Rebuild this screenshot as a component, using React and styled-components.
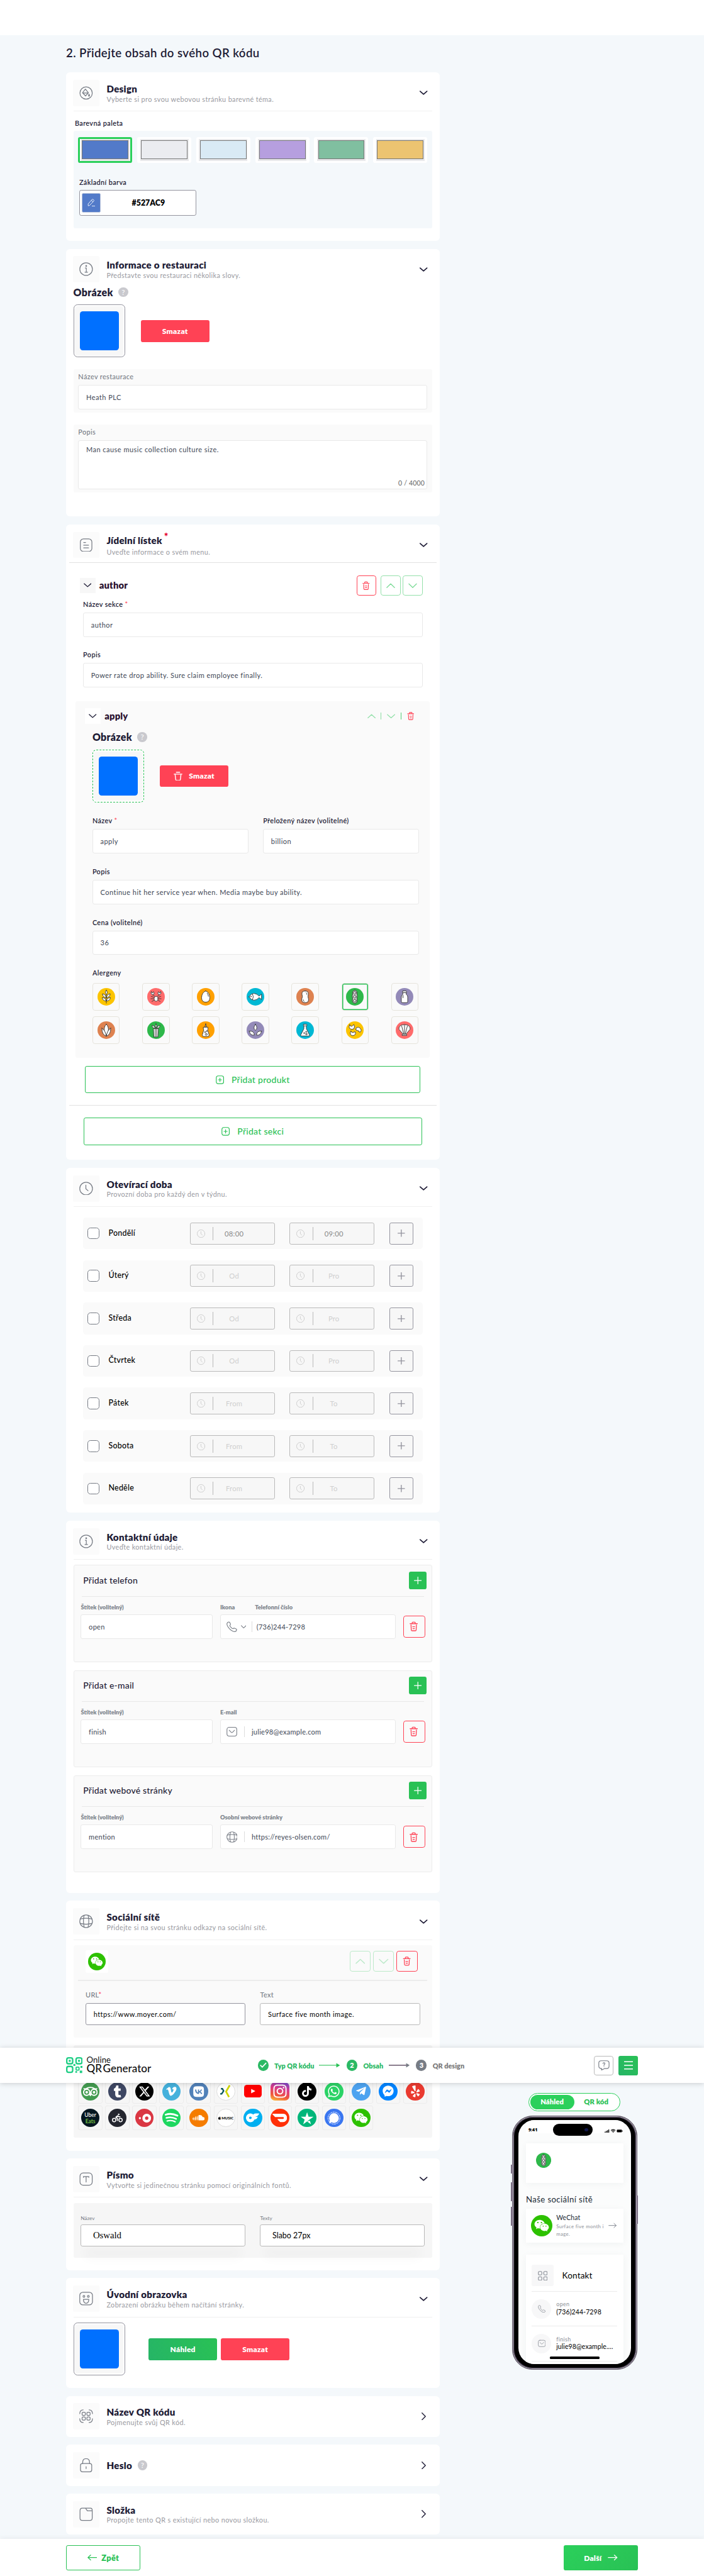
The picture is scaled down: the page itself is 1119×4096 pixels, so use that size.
import React from "react";
import styled, { createGlobalStyle, css } from "styled-components";
import {
  FaTumblr, FaXTwitter, FaVimeoV, FaVk, FaInstagram, FaTiktok, FaWhatsapp,
  FaFacebookMessenger, FaYelp, FaSoundcloud, FaWeixin, FaApple, FaPersonBiking,
} from "react-icons/fa6";
import { FaTelegramPlane } from "react-icons/fa";
import { SiTripadvisor, SiOnlyfans, SiDoordash, SiTrustpilot } from "react-icons/si";

const c = {
  page: "#f4f8fb", ink: "#1e1c36", green: "#29c155", lime: "#2bd05b", red: "#ff4255",
  grey: "#777c85", soft: "#999a9f", line: "#e9e9e9", panel: "#fafafa", frame: "#94949e", blue: "#0070ff",
};

const Global = createGlobalStyle`
  body { margin: 0; background: #fff; }
  *, *::before, *::after { box-sizing: border-box; }
  svg { display: block; flex: none; }
`;

/* ---------- page frame ---------- */
const Page = styled.div`
  zoom: 0.7772; position: relative; width: 100%; height: 5270px; overflow: hidden;
  font-family: Lato, "Open Sans", sans-serif; color: ${c.ink}; letter-spacing: 0.03em;
  background: #fff; padding-top: 72px;
`;
const Columns = styled.div`
  background: ${c.page}; height: 5122px; display: flex; padding-left: 135px;
`;
const Main = styled.main`width: 764px;`;
const Title = styled.h1`
  margin: 0 0 24px; padding-top: 20px; height: 52px; font-size: 24px; line-height: 34px; font-weight: 600; white-space: nowrap;
  letter-spacing: 0.022em;
`;
const Card = styled.section`
  background: #fff; border-radius: 8px; height: ${p => p.$h}px; padding: 15px 15px 0; margin-bottom: 16px; overflow: hidden;
`;
const Head = styled.header`
  display: flex; align-items: center; height: 54px; ${p => p.$line && css`height: 65px; padding-bottom: 9px; border-bottom: 2px solid #f0f0f0;`}
`;
const HeadIcon = styled.div`
  width: 54px; height: 54px; border-radius: 4px; background: #fbfbfb; color: ${c.grey};
  display: flex; align-items: center; justify-content: center; margin: 0 15px 0 -1px;
`;
const HeadText = styled.div`flex: 1; padding-top: ${p => (p.$single ? 0 : 1)}px;`;
const HeadTitle = styled.h2`
  margin: 0; font-size: 19.5px; font-weight: 800; line-height: ${p => (p.$tall ? 28 : 24)}px; display: flex; align-items: center; letter-spacing: 0.018em;
`;
const HeadSub = styled.p`margin: 0; font-size: 14px; line-height: 18px; color: ${c.soft};`;
const Star = styled.span`color: #e5002b; font-size: 20px; line-height: 10px; margin-left: 4px; align-self: flex-start;`;
const ChevronSlot = styled.div`width: 34px; display: flex; justify-content: center; padding-right: 1px;`;

/* ---------- shared parts ---------- */
const Row = styled.div`display: flex; align-items: center; gap: ${p => p.$gap || 0}px;`;
const Label = styled.div`
  height: 20px; line-height: 20px; font-size: 14px; font-weight: ${p => p.$w || 600}; color: ${p => p.$c || c.ink};
  white-space: nowrap; margin-bottom: ${p => p.$mb ?? 7}px;
`;
const Req = styled.span`color: ${c.red}; font-weight: 500;`;
const Input = styled.div`
  height: ${p => p.$h || 50}px; border: ${p => p.$b || 2}px solid ${p => p.$bc || c.line}; border-radius: 4px; background: #fff; letter-spacing: 0.042em;
  padding: 0 15px; display: flex; align-items: center; font-size: 14.2px; color: ${p => p.$c || "#414856"}; white-space: nowrap;
`;
const Rule = styled.div`height: ${p => p.$t || 1}px; background: ${p => p.$c || "#e5e5e5"}; margin: ${p => p.$m || 0};`;
const SubTitle = styled.h3`
  margin: 0; font-size: 20.5px; line-height: 26px; font-weight: 800; display: flex; align-items: center; gap: 11px; letter-spacing: 0.018em;
`;
const Hint = styled.span`
  width: 20px; height: 20px; border-radius: 50%; background: #c9c9ce; color: #fff; font-size: 15px; line-height: 20px;
  text-align: center; font-weight: 400; letter-spacing: 0; ${p => p.$ml && css`margin-left: 11px;`}
`;
const Thumb = styled.div`
  width: 106px; height: 108px; border-radius: 8px; padding: 2px; background: #fff;
  border: ${p => (p.$dashed ? `1px dashed ${c.green}` : `2px solid ${c.frame}`)};
  & > div { height: 100%; border-radius: 6px; background: #f7f7f7; display: flex; align-items: center; justify-content: center; }
  & > div > div { width: 80px; height: 80px; border-radius: 6px; background: ${c.blue}; }
`;
const Picture = ({ dashed }) => <Thumb $dashed={dashed}><div><div /></div></Thumb>;
const Solid = styled.button`
  border: 0; width: ${p => p.$w || 140}px; height: ${p => p.$h || 45}px; border-radius: 4px; padding: 0; color: #fff; background: ${p => p.$bg || c.red};
  font: 800 15.5px Lato, sans-serif; letter-spacing: 0.02em; display: flex; align-items: center; justify-content: center; gap: 13px;
`;
const Outline = styled.button`
  width: ${p => p.$w || "auto"}; height: ${p => p.$h || 56}px; border: 1px solid ${c.green}; border-radius: 4px; background: #fff; color: ${c.green};
  font: ${p => p.$fw || 500} ${p => p.$fs || 18}px Lato, sans-serif; letter-spacing: 0.02em; padding: 0;
  display: flex; align-items: center; justify-content: center; gap: ${p => p.$gap || 15}px; margin: ${p => p.$m || 0};
`;
const Square = styled.div`
  width: ${p => p.$s}px; height: ${p => p.$s}px; border-radius: 5px; border: 1px solid ${p => p.$c}; color: ${p => p.$ic || p.$c};
  display: flex; align-items: center; justify-content: center; flex: none;
`;
const Toggle = styled.div`
  width: 32px; height: 32px; background: ${p => p.$bg}; display: flex; align-items: center; justify-content: center; margin-right: 8px;
`;
const ItemName = styled.div`font-size: 19px; font-weight: 800; color: #2a1230; flex: 1; letter-spacing: 0.01em; line-height: 26px; padding-bottom: 2px;`;
const Gap = styled.div`width: ${p => p.$w}px; flex: none;`;
const Pad = styled.div`height: ${p => p.$t}px;`;

/* ---------- icons ---------- */
const Chev = ({ dir = "down", w = 16, h = 9, s = 1.8, color = "currentColor" }) => {
  const d = { down: "M1 1.5 8 8 15 1.5", up: "M1 8 8 1.5 15 8" }[dir];
  return <svg width={w} height={h} viewBox="0 0 16 9.5" preserveAspectRatio="none" fill="none" stroke={color} strokeWidth={s} strokeLinecap="round" strokeLinejoin="round"><path d={d} /></svg>;
};
const ChevRight = () => (
  <svg width="9" height="16" viewBox="0 0 9 16" fill="none" stroke={c.ink} strokeWidth="1.8" strokeLinecap="round" strokeLinejoin="round"><path d="M1 1 8 8 1 15" /></svg>
);
const Trash = ({ w = 16, h = 19, color = c.red }) => (
  <svg width={w} height={h} viewBox="0 0 16 19" fill="none" stroke={color} strokeWidth="1.6" strokeLinecap="round" strokeLinejoin="round">
    <path d="M1 4.2H15M5 4V2.4Q5 1.2 6.2 1.2H9.8Q11 1.2 11 2.4V4M2.8 6.5 3.3 16.2Q3.4 17.8 5 17.8H11Q12.6 17.8 12.7 16.2L13.2 6.5M6 10H10M6.5 13.6H9.5" />
  </svg>
);
const TrashPlain = () => (
  <svg width="18" height="19" viewBox="0 0 18 19" fill="none" stroke="#fff" strokeWidth="1.8" strokeLinecap="round" strokeLinejoin="round">
    <path d="M1 5H17M5.5 1.2H12.5M3 5.5 4.2 16Q4.5 17.8 6.2 17.8H11.8Q13.5 17.8 13.8 16L15 5.5" />
  </svg>
);
const Plus = ({ s = 16, w = 1.6, color = "currentColor" }) => (
  <svg width={s} height={s} viewBox="0 0 16 16" stroke={color} strokeWidth={w} strokeLinecap="round"><path d="M8 .8V15.2M.8 8H15.2" /></svg>
);
const PlusBox = () => (
  <svg width="17" height="18" viewBox="0 0 17 18" fill="none" stroke={c.green} strokeWidth="1.5" strokeLinecap="round">
    <rect x="1" y="1" width="15" height="16" rx="4" /><path d="M8.5 5.6V12.4M5.2 9H11.8" />
  </svg>
);
const G = ({ children, s = 28, sw = 1.6 }) => (
  <svg width={s} height={s} viewBox="0 0 28 28" fill="none" stroke="currentColor" strokeWidth={sw} strokeLinecap="round" strokeLinejoin="round">{children}</svg>
);
const Icons = {
  bucket: <G><circle cx="14" cy="14" r="12.6" /><path d="M12.5 6 18.5 13.5 12.8 20 6.8 13.5ZM6.8 14H18.5" /><path d="M20 16.5Q21.8 19 20 20.6 18.2 19 20 16.5Z" /></G>,
  info: <G><circle cx="14" cy="14" r="12.9" /><path d="M12.2 11.6H14.4V20.2M11.6 20.3H17" /><circle cx="14.2" cy="7.6" r=".9" fill="currentColor" /></G>,
  note: <G><rect x="2.2" y="1" width="23.6" height="26" rx="6.5" /><path d="M9 8.4H13M9 14H19M9 19.6H19" /></G>,
  clock: <G><circle cx="14" cy="14" r="13" /><path d="M13.5 7V14.5L18 18.5" /></G>,
  globe: <G><circle cx="14" cy="14" r="13" /><path d="M10 2Q7 14 10 26M18 2Q21 14 18 26M2 9.5Q14 6.5 26 9.5M2 18.5Q14 21.5 26 18.5" /></G>,
  type: <G><rect x="1.5" y="1.5" width="25" height="25" rx="6.5" /><path d="M8.5 10.5V9H19.5V10.5M14 9V20" /></G>,
  smile: <G><rect x="1" y="1" width="26" height="26" rx="6.5" /><circle cx="9.5" cy="9.5" r="1.8" /><circle cx="18.5" cy="9.5" r="1.8" /><path d="M8.5 15.5H19.5Q19.5 23.5 14 23.5 8.5 23.5 8.5 15.5Z" /></G>,
  qr: <G><path d="M1 9Q1 1 8 1M20 1Q27 1 27 9M1 19Q1 27 8 27M20 27Q27 27 27 19" /><rect x="5.8" y="5.8" width="6.6" height="6.6" rx="1.8" /><rect x="15.6" y="5.8" width="6.6" height="6.6" rx="1.8" /><rect x="5.8" y="15.6" width="6.6" height="6.6" rx="1.8" /><rect x="15.6" y="15.6" width="6.6" height="6.6" rx="1.8" /></G>,
  lock: <G><rect x="2.5" y="10.5" width="23" height="17" rx="4" /><path d="M7 10.5V8Q7 .6 14 .6 21 .6 21 8V10.5M14 17V21" /></G>,
  folder: <G><path d="M1.5 7Q1.5 1.5 6 1.5H23Q26.5 1.5 26.5 6V21.5Q26.5 26.5 22 26.5H6Q1.5 26.5 1.5 22ZM13 1.8 16.5 7H26.3" /></G>,
};
const Phone = ({ s = 22 }) => (
  <svg width={s} height={s} viewBox="0 0 22 22" fill="none" stroke="currentColor" strokeWidth="1.4" strokeLinejoin="round">
    <path d="M1 4.5Q2 1.5 4.6 1.2 6.6 1 8 5.2 8.6 7 6.9 8.3 6.2 9.3 9.3 12.4 12.4 15.6 13.4 15.1 14.8 13.5 16.5 14.1 21 15.6 20.8 17.2 20.5 20 17.8 21 12.5 21.5 6.5 15.5.3 9 1 4.5Z" />
  </svg>
);
const Mail = ({ s = 22 }) => (
  <svg width={s} height={s} viewBox="0 0 22 22" fill="none" stroke="currentColor" strokeWidth="1.4" strokeLinejoin="round" strokeLinecap="round">
    <rect x="1" y="2" width="20" height="18" rx="4.5" /><path d="M5.5 8 9.5 12Q11 13.4 12.5 12L16.5 8" />
  </svg>
);
const Arrow = ({ left, w = 20, color = "#fff", s = 1.6 }) => (
  <svg width={w} height="12" viewBox="0 0 20 12" fill="none" stroke={color} strokeWidth={s} strokeLinecap="round" strokeLinejoin="round">
    <path d={left ? "M19 6H1M6.5 1 1 6 6.5 11" : "M1 6H19M13.5 1 19 6 13.5 11"} />
  </svg>
);

const Section = ({ icon, title, sub, h, line = true, closed, star, hint, children }) => (
  <Card $h={h}>
    <Head $line={line && !closed}>
      <HeadIcon>{Icons[icon]}</HeadIcon>
      <HeadText $single={!sub}>
        <HeadTitle $tall={star}>{title}{star && <Star>*</Star>}{hint && <Hint $ml>?</Hint>}</HeadTitle>
        {sub && <HeadSub>{sub}</HeadSub>}
      </HeadText>
      <ChevronSlot>{closed ? <ChevRight /> : <Chev s={2.1} color={c.ink} />}</ChevronSlot>
    </Head>
    {children}
  </Card>
);

/* ---------- design ---------- */
const PaletteLabel = styled.div`padding: 14px 0 6px 3px; height: 40px;`;
const PalettePanel = styled.div`background: ${c.page}; border-radius: 4px; height: 199px;`;
const Swatches = styled.div`display: grid; grid-template-columns: repeat(6, 1fr); gap: 10px; padding: 12px 10px 0;`;
const Swatch = styled.div`
  height: 53px; border-radius: 4px; border: 4px solid ${p => (p.$on ? c.lime : "#fff")}; background: #fff; padding: 0 2px;
  & > div { height: 45px; background: #e9e9eb; padding: 3px 2px; }
  & > div > div { height: 39px; border: 1px solid #777; background: ${p => p.$c}; }
`;
const BaseColor = styled.div`padding: 30px 0 0 12px;`;
const ColorInput = styled.div`
  width: 240px; height: 52px; border: 2px solid ${c.frame}; border-radius: 4px; background: #fff; display: flex; align-items: center; padding-left: 4px;
  font-size: 16px; font-weight: 800; color: #000; letter-spacing: 0;
`;
const ColorTile = styled.div`
  width: 39px; height: 39px; border-radius: 3px; background: #527ac9; border: 1px solid #b9c4dc; display: flex; align-items: center; justify-content: center;
`;
const ColorText = styled.div`flex: 1; text-align: center;`;

const Design = () => (
  <Section icon="bucket" title="Design" sub="Vyberte si pro svou webovou stránku barevné téma." h={345}>
    <PaletteLabel><Label $mb={0}>Barevná paleta</Label></PaletteLabel>
    <PalettePanel>
      <Swatches>
        {["#527ac9", "#ebecf0", "#d9eaf5", "#b69fdf", "#80bfa0", "#ecc471"].map((x, i) => (
          <Swatch key={x} $c={x} $on={i === 0}><div><div /></div></Swatch>
        ))}
      </Swatches>
      <BaseColor>
        <Label $mb={6}>Základní barva</Label>
        <ColorInput>
          <ColorTile>
            <svg width="16" height="16" viewBox="0 0 16 16" fill="none" stroke="#fff" strokeWidth="1.1" strokeLinejoin="round" strokeLinecap="round">
              <path d="M1.5 14V10.5L9.5 1.5Q11 .5 12.5 2 14 3.2 12.8 4.8L4.8 13.3ZM8 3.2 11.3 6.3M9.5 15H15" />
            </svg>
          </ColorTile>
          <ColorText>#527AC9</ColorText>
        </ColorInput>
      </BaseColor>
    </PalettePanel>
  </Section>
);

/* ---------- restaurant info ---------- */
const InfoBody = styled.div`padding-top: 7px;`;
const ThumbRow = styled.div`display: flex; align-items: center; gap: 32px; padding-top: ${p => p.$t || 0}px;`;
const FieldPanel = styled.div`
  background: ${c.panel}; border-radius: 4px; height: ${p => p.$h}px; margin-top: 24px; padding: 6px 10px 0;
`;
const TextArea = styled.div`
  height: 100px; border: 2px solid ${c.line}; border-radius: 4px; background: #fff; padding: 8px 4px 0 15px; font-size: 14.2px; line-height: 20px;
  color: #414856; display: flex; flex-direction: column; justify-content: space-between; letter-spacing: 0.042em;
`;
const Counter = styled.div`align-self: flex-end; color: #666; font-size: 13.5px; letter-spacing: 0.02em;`;

const Info = () => (
  <Section icon="info" title="Informace o restauraci" sub="Představte svou restauraci několika slovy." h={548} line={false}>
    <InfoBody>
      <SubTitle>Obrázek <Hint>?</Hint></SubTitle>
      <ThumbRow $t={12}><Picture /><Solid>Smazat</Solid></ThumbRow>
      <FieldPanel $h={89}><Label $w={500} $c={c.grey}>Název restaurace</Label><Input>Heath PLC</Input></FieldPanel>
      <FieldPanel $h={139}><Label $w={500} $c={c.grey}>Popis</Label><TextArea><span>Man cause music collection culture size.</span><Counter>0 / 4000</Counter></TextArea></FieldPanel>
    </InfoBody>
  </Section>
);

/* ---------- menu ---------- */
const Bleed = styled.div`margin: ${p => p.$t}px -9px 0; height: 1px; background: #e2e2e2;`;
const MenuBody = styled.div`padding: 26px 20px 0;`;
const Shift = styled.div`margin-left: -7px;`;
const Field = styled.div`margin-bottom: ${p => p.$mb ?? 26}px; flex: 1;`;
const Product = styled.div`
  margin: 3px -15px 16px; height: 730px; background: ${c.panel}; border-radius: 4px; padding: 14px 22px 0 19px;
`;
const ProductBody = styled.div`padding: 14px 0 0 15px;`;
const Bar = styled.span`width: ${p => p.$w || 1}px; height: 15px; background: ${c.green}; opacity: ${p => (p.$w ? 0.8 : 0.55)};`;
const Allergens = styled.div`
  display: grid; grid-template-columns: repeat(7, 56px); justify-content: space-between; row-gap: 12px; padding-right: 1px;
`;
const Allergen = styled.div`
  height: 56px; border: 2px solid #e6e4dc; border-radius: 5px; display: flex; align-items: center; justify-content: center;
  ${p => p.$on && css`box-shadow: inset 0 0 0 2px ${c.green};`}
`;
const alg = {
  wheat: ["#fcc400", <><path d="M18 13V31" /><path d="M18 4.5Q14 9 18 13.5 22 9 18 4.5ZM17.6 19.5Q11 19.5 10 12 17 12.5 17.6 19.5ZM18.4 19.5Q25 19.5 26 12 19 12.5 18.4 19.5ZM17.6 26.5Q11 27 9.5 19.5 17 20 17.6 26.5ZM18.4 26.5Q25 27 26.5 19.5 19 20 18.4 26.5Z" /></>],
  crab: ["#ff6b6b", <><path d="M13.5 19 8 17M13 22 7.5 22M14 25 9.5 27.5M22.5 19 28 17M23 22 28.5 22M22 25 26.5 27.5M15 17 12 13.5M21 17 24 13.5" /><ellipse cx="18" cy="22" rx="4" ry="5" /><path d="M11.500 14Q6 12 8.5 7L10.5 10.5 13 7.5Q16 12 11.5 14ZM24.5 14Q30 12 27.5 7L25.5 10.5 23 7.5Q20 12 24.5 14Z" /></>],
  egg: ["#ffa000", <><path d="M18 6Q26 9 26.5 20 26 29 18 29 10 29 9.5 20 10 9 18 6Z" /><path d="M21 10.5Q23.5 14 23.5 17" /></>],
  fish: ["#00b8d4", <><path d="M5 18Q9 11 15 11 21 11.500 25.5 16.5L30.500 12.5V23.5L25.5 19.5Q21 25 15 25 9 25 5 18Z" /><path d="M12 12Q15.5 18 12 24" /><circle cx="9" cy="17.5" r=".8" /></>],
  peanut: ["#de8250", <><path d="M18 6Q25 6 24.5 12.5 23 17.5 25 23 25.5 30 18 30 10.5 30 11 23 13.5 17.5 11.5 12.5 11 6 18 6Z" /><path d="M20 9.5Q22 10.5 21.5 13M14 24Q14 26 16 27.5" /></>],
  bean: ["#2eb84a", <><path d="M18 4.5Q23.5 5.500 22.500 12 24 16 22.5 21 24.500 30 18 31.500 11.500 30 13.500 21 12 16 13.500 12 12.500 5.500 18 4.5Z" fill="#ccc" /><circle cx="18" cy="10" r="2.6" /><circle cx="18" cy="18" r="2.6" /><circle cx="18" cy="26" r="2.6" /></>],
  milk: ["#938ab8", <><rect x="14" y="6" width="8" height="4" rx="1" /><path d="M14.5 10V13Q11.5 15 11.5 18V28Q12 30 14 30H22Q24 30 24.5 28V18Q24.5 15 21.5 13V10Z" /><path d="M15 15V20" /></>],
  nut: ["#de8250", <><path d="M18 6Q12.5 11 14 20L18 30 22 20Q23.5 11 18 6Z" /><path d="M9 14Q16 18 18 30.5 8.5 27 9 14ZM27 14Q20 18 18 30.5 27.5 27 27 14Z" /></>],
  celery: ["#2eb84a", <><path d="M18 5Q14.5 9 18 14 21.5 9 18 5ZM15.5 14Q10 14 10 8 15.5 9 16.5 14ZM20.5 14Q26 14 26 8 20.5 9 19.5 14Z" /><path d="M13 15H23L22 32H14Z" /><path d="M16.5 16V31M19.5 16V31" /></>],
  mustard: ["#ffa000", <><path d="M16.5 11 18 4.5 19.5 11Z" /><path d="M13.5 12H22.5V16Q21 18 23 21L25 28Q25 31 22 31H14Q11 31 11 28L13 21Q15 18 13.5 16Z" /><circle cx="16.5" cy="22" r="1" /><circle cx="20" cy="20" r="1" /><circle cx="19" cy="26.5" r="2" /></>],
  sesame: ["#938ab8", <><path d="M18 6Q24 14 18 18.5 12 14 18 6ZM5.5 20Q15 19 16 28 7.500 30 5.5 20ZM30.5 20Q21 19 20 28 28.5 30 30.5 20Z" /></>],
  flask: ["#00b8d4", <><path d="M15.5 9V15L9 28Q8.5 30 10.5 30H25.5Q27.5 30 27 28L20.5 15V9Z" /><rect x="14.5" y="6" width="7" height="3.2" rx="1" /><circle cx="16" cy="24" r="1" /><circle cx="20" cy="21.5" r="1" /><circle cx="20.5" cy="26" r="1.6" /></>],
  cashew: ["#fcc400", <><path d="M7.5 7Q8.5 11 12 10 14.5 8 16 6.5 19.5 12 15.5 15.5 9 18 6.5 12.5 6 9 7.5 7ZM20 16Q20 12 25 12 31 14 31 19 30 23 27 22 27 18.5 23.5 19 20 19 20 16ZM10 20Q11 23 14 23 17 21.5 19 21.5 21 26 17 28.5 11 31 9 26 8 22 10 20Z" /></>],
  shell: ["#ff6b6b", <><path d="M15 26 6.5 16Q6 10 10 9 12 6 15 7.5 18 5 21 7.5 24 6 26 9 30 10 29.5 16L21 26Z" /><path d="M13.5 26.5H22.5V29H13.5ZM16.5 26 12 9M19.5 26 24 9M18 26V7" /></>],
};
const AllergenIcon = ({ k, s = 36 }) => (
  <svg width={s} height={s} viewBox="0 0 36 36">
    <circle cx="18" cy="18" r="18" fill={alg[k][0]} />
    <g fill="#fff" stroke="#3a3a3a" strokeWidth="1.2" strokeLinejoin="round" strokeLinecap="round">{alg[k][1]}</g>
  </svg>
);
const pale = "#94e0aa";

const Menu = () => (
  <Section icon="note" title="Jídelní lístek" sub="Uveďte informace o svém menu." h={1300} line={false} star>
    <Bleed $t={9} />
    <MenuBody>
      <Row>
        <Shift><Toggle $bg="#f7f7f7"><Chev color={c.ink} /></Toggle></Shift>
        <ItemName>author</ItemName>
        <Square $s={40} $c={c.red}><Trash w={15} /></Square>
        <Gap $w={10} /><Square $s={40} $c={pale} $ic="#7ddb98"><Chev dir="up" w={18} h={11} s={1.5} /></Square>
        <Gap $w={5} /><Square $s={40} $c={pale} $ic="#7ddb98"><Chev w={18} h={11} s={1.5} /></Square>
      </Row>
      <Field $mb={26}><Pad $t={8} /><Label>Název sekce <Req>*</Req></Label><Input>author</Input></Field>
      <Field $mb={0}><Label>Popis</Label><Input>Power rate drop ability. Sure claim employee finally.</Input></Field>
      <Pad $t={26} />
      <Product>
        <Row>
          <Toggle $bg="#fff"><Chev color={c.ink} /></Toggle>
          <ItemName>apply</ItemName>
          <Row $gap={11}>
            <Chev dir="up" w={17} h={10} s={1.5} color={pale} /><Bar /><Chev w={17} h={10} s={1.5} color={pale} /><Bar $w={2} /><Trash w={15} h={17} />
          </Row>
          <Gap $w={10} />
        </Row>
        <ProductBody>
          <SubTitle>Obrázek <Hint>?</Hint></SubTitle>
          <ThumbRow $t={13}><Picture dashed /><Solid><TrashPlain />Smazat</Solid></ThumbRow>
          <Pad $t={27} />
          <Row $gap={30}>
            <Field><Label>Název <Req>*</Req></Label><Input>apply</Input></Field>
            <Field><Label>Přeložený název (volitelné)</Label><Input>billion</Input></Field>
          </Row>
          <Field $mb={27}><Pad $t={1} /><Label>Popis</Label><Input>Continue hit her service year when. Media maybe buy ability.</Input></Field>
          <Field $mb={26}><Label>Cena (volitelné)</Label><Input>36</Input></Field>
          <Label $mb={12}>Alergeny</Label>
          <Allergens>{Object.keys(alg).map(k => <Allergen key={k} $on={k === "bean"}><AllergenIcon k={k} /></Allergen>)}</Allergens>
        </ProductBody>
      </Product>
      <Outline $m="0 4px" $w="686px"><PlusBox />Přidat produkt</Outline>
    </MenuBody>
    <Bleed $t={24} />
    <Outline $m="25px 0 0 21px" $w="692px"><PlusBox />Přidat sekci</Outline>
  </Section>
);

/* ---------- opening hours ---------- */
const Days = styled.div`padding: 22px 20px 0; display: grid; gap: 22px;`;
const Day = styled.div`height: 65px; background: ${c.panel}; border-radius: 6px; display: flex; align-items: center; padding: 0 17px 0 9px;`;
const Check = styled.span`width: 24px; height: 24px; border: 2px solid ${c.grey}; border-radius: 6px; background: #fff;`;
const DayName = styled.div`width: 166px; margin-left: 19px; font-size: 16px; font-weight: 500; color: #000; padding-bottom: 3px; letter-spacing: 0.02em;`;
const Time = styled.div`
  width: 174px; height: 45px; margin-right: 30px; border: 1px solid #b9b9b9; border-radius: 4px; background: #f7f7f7; display: flex; align-items: center; padding-left: 13px; color: #ccc;
`;
const TimeText = styled.div`
  border-left: 1px solid #b9b9b9; height: 27px; margin-left: 16px; width: 86px; text-align: center; line-height: 29px; font-size: 14.5px; letter-spacing: 0.02em; color: ${p => (p.$on ? "#888" : "#cfcfcf")};
`;
const PlusCell = styled.div`
  width: 50px; height: 45px; border: 1px solid ${c.frame}; border-radius: 4px; background: #f7f7f7; display: flex; align-items: center; justify-content: center; margin-right: -1px; flex: none;
`;
const week = [
  ["Pondělí", "08:00", "09:00", true], ["Úterý", "Od", "Pro"], ["Středa", "Od", "Pro"], ["Čtvrtek", "Od", "Pro"],
  ["Pátek", "From", "To"], ["Sobota", "From", "To"], ["Neděle", "From", "To"],
];
const Hours = () => (
  <Section icon="clock" title="Otevírací doba" sub="Provozní doba pro každý den v týdnu." h={706}>
    <Days>
      {week.map(([d, a, b, on]) => (
        <Day key={d}>
          <Check /><DayName>{d}</DayName>
          {[a, b].map(t => (
            <Time key={t}>
              <G s={17} sw={2}><circle cx="14" cy="14" r="13" /><path d="M13.5 7V14.5L18 18.5" /></G>
              <TimeText $on={on}>{t}</TimeText>
            </Time>
          ))}
          <PlusCell><Plus s={15} color={c.frame} w={1.9} /></PlusCell>
        </Day>
      ))}
    </Days>
  </Section>
);

/* ---------- contact ---------- */
const ContactBox = styled.div`
  height: 199px; border: 1px solid #ececec; border-radius: 4px; background: ${c.panel}; margin-bottom: 16px; padding: 12px 10px 0 14px;
`;
const ContactHead = styled.div`display: flex; justify-content: space-between; align-items: center; font-size: 18px; font-weight: 500; height: 36px; padding-left: 5px; letter-spacing: 0.015em;`;
const Add = styled.div`width: 36px; height: 36px; border-radius: 4px; background: ${c.green}; display: flex; align-items: center; justify-content: center;`;
const Small = styled.div`font-size: 12px; font-weight: 800; color: #80868e; line-height: 18px; height: 24px; width: ${p => p.$w}px; white-space: nowrap; letter-spacing: 0;`;
const IconIn = styled.div`display: flex; align-items: center; margin-left: -4px; color: ${c.grey}; width: ${p => p.$w}px; height: 22px; border-right: 1px solid #dcdcdc; margin-right: ${p => p.$mr}px; gap: 8px;`;
const InputCol = styled.div`width: ${p => p.$w}px; margin-right: 15px; & > div { letter-spacing: 0.025em; }`;

const Contact = ({ title, tag, labels, icon, value, wide }) => (
  <ContactBox>
    <ContactHead>{title}<Add><Plus color="#fff" s={16} /></Add></ContactHead>
    <Rule $c="#e9e9e9" $m="14px 6px 13px 2px" />
    <Row>
      <Small $w={285}>Štítek (volitelný)</Small>
      {labels.map((l, i) => <Small key={l} $w={labels.length > 1 && i === 0 ? 71 : 200}>{l}</Small>)}
    </Row>
    <Row>
      <InputCol $w={270}><Input>{tag}</Input></InputCol>
      <InputCol $w={359}>
        <Input><IconIn $w={wide ? 53 : 38} $mr={wide ? 9 : 14}>{icon}{wide && <Chev w={11} h={7} s={2} />}</IconIn>{value}</Input>
      </InputCol>
      <Square $s={45} $c={c.red}><Trash w={17} h={21} /></Square>
    </Row>
  </ContactBox>
);
const Contacts = () => (
  <Section icon="info" title="Kontaktní údaje" sub="Uveďte kontaktní údaje." h={762}>
    <Pad $t={11} />
    <Contact title="Přidat telefon" tag="open" labels={["Ikona", "Telefonní číslo"]} icon={<Phone />} value="(736)244-7298" wide />
    <Contact title="Přidat e-mail" tag="finish" labels={["E-mail"]} icon={<Mail />} value="julie98@example.com" />
    <Contact title="Přidat webové stránky" tag="mention" labels={["Osobní webové stránky"]} icon={<G s={23}>{Icons.globe.props.children}</G>} value="https://reyes-olsen.com/" />
  </Section>
);

/* ---------- social ---------- */
const SocialPanel = styled.div`background: ${c.panel}; border-radius: 4px; height: 189px; margin-top: 11px; padding: 10px 10px 0;`;
const SocialTop = styled.div`display: flex; align-items: center; justify-content: space-between; padding: 0 20px 0 15px; height: 46px;`;
const LogoTile = styled.div`width: 46px; height: 46px; border-radius: 4px; background: #fff; display: flex; align-items: center; justify-content: center;`;
const SocialFields = styled.div`display: grid; grid-template-columns: 327px 327px; gap: 30px; padding: 18px 15px 0;`;
const Brand = styled.div`
  width: ${p => p.$s || 38}px; height: ${p => p.$s || 38}px; border-radius: ${p => p.$r || "50%"}; background: ${p => p.$bg}; color: #fff;
  display: flex; align-items: center; justify-content: center; flex: none; font-size: ${p => p.$f || 22}px; ${p => p.$ring && css`border: 1px solid #dcdcdc;`}
`;
const Grid13 = styled.div`
  margin-top: 15px; height: 190px; background: #f6f6f6; border-radius: 4px; padding: 70px 10px 0; display: grid; grid-template-columns: repeat(13, 1fr);
  grid-auto-rows: 49.5px; gap: 5px 5.8px; align-content: start;
`;
const Cell = styled.div`border: 1px solid #ececec; border-radius: 4px; display: flex; align-items: center; justify-content: center;`;
const Uber = styled.div`font: 500 11px/13px Lato, sans-serif; text-align: center; color: #fff; letter-spacing: 0; & > b { display: block; color: #7ccf45; font-weight: 600; }`;
const Music = styled.div`font: 800 7.5px Lato, sans-serif; display: flex; align-items: center; letter-spacing: 0; color: #111;`;
const WeChat = ({ s = 36 }) => <Brand $s={s} $bg="#2dc100" $f={s * 0.7}><FaWeixin /></Brand>;
const Xing = () => (
  <svg width="22" height="26" viewBox="0 0 22 26" fill="none"><path d="M1.5 8H4.5L7 12.5 3 18.5H0" stroke="#0a5a5d" strokeWidth="3" /><path d="M19.5 1 12 14 18 25" stroke="#cfd600" strokeWidth="3.6" /></svg>
);
const OpenTable = () => (
  <svg width="26" height="18" viewBox="0 0 26 18"><circle cx="3" cy="9" r="2.2" fill="#fff" /><circle cx="17" cy="9" r="6.2" fill="none" stroke="#fff" strokeWidth="5.5" /></svg>
);
const SignalIcon = () => (
  <svg width="28" height="28" viewBox="0 0 28 28"><circle cx="14" cy="14" r="10" fill="#fff" /><path d="M4 25 5.5 18 10 22Z" fill="#fff" /><circle cx="14" cy="14" r="12.3" fill="none" stroke="#fff" strokeWidth="1.2" strokeDasharray="4 1" /></svg>
);
const YouTube = () => (
  <svg width="36" height="26" viewBox="0 0 36 26"><rect width="36" height="26" rx="6" fill="#f00" /><path d="M14.5 8.5V17.5L23 13Z" fill="#fff" /></svg>
);
const SpotifyMark = () => (
  <svg width="30" height="22" viewBox="0 0 30 22" fill="none" stroke="#fff" strokeLinecap="round"><path d="M3 4.5Q15 .5 27 6.5" strokeWidth="3.6" /><path d="M4.5 11Q15 8 24.5 13" strokeWidth="3.2" /><path d="M6 17.5Q15 15 22.5 19" strokeWidth="2.6" /></svg>
);
const brands = [
  <Brand $bg="#439b50" $f={30}><SiTripadvisor /></Brand>, <Brand $bg="#3e4763" $f={25}><FaTumblr /></Brand>, <Brand $bg="#000" $f={25}><FaXTwitter /></Brand>,
  <Brand $bg="#45b1dc" $f={24}><FaVimeoV /></Brand>, <Brand $bg="#5181b8" $f={25}><FaVk /></Brand>, <Brand $bg="#fff" $ring><Xing /></Brand>,
  <Brand $bg="transparent"><YouTube /></Brand>, <Brand $r="9px" $bg="linear-gradient(15deg,#fcc63c 0%,#f0543c 30%,#d93a8c 62%,#6a4bd6 100%)" $f={31}><FaInstagram /></Brand>,
  <Brand $bg="#000"><FaTiktok /></Brand>, <Brand $bg="#2bd366" $f={27}><FaWhatsapp /></Brand>, <Brand $bg="#4da3f0" $f={23}><FaTelegramPlane /></Brand>,
  <Brand $bg="#0084ff" $f={23}><FaFacebookMessenger /></Brand>, <Brand $bg="#ea3a30" $f={24}><FaYelp /></Brand>,
  <Brand $bg="#051620"><Uber>Uber<b>Eats</b></Uber></Brand>, <Brand $bg="#24262f"><FaPersonBiking /></Brand>, <Brand $bg="#da3743"><OpenTable /></Brand>,
  <Brand $bg="#1ed760"><SpotifyMark /></Brand>, <Brand $bg="#f57c00" $f={25}><FaSoundcloud /></Brand>, <Brand $bg="#fff" $ring><Music><FaApple />MUSIC</Music></Brand>,
  <Brand $bg="#00aff0" $f={27}><SiOnlyfans /></Brand>, <Brand $bg="#ff3008" $f={30}><SiDoordash /></Brand>, <Brand $bg="#00b67a" $f={26}><SiTrustpilot /></Brand>,
  <Brand $bg="#3a76f0"><SignalIcon /></Brand>, <Brand $bg="#2dc100" $f={28}><FaWeixin /></Brand>,
];
const Social = () => (
  <Section icon="globe" title="Sociální sítě" sub="Přidejte si na svou stránku odkazy na sociální sítě." h={511}>
    <SocialPanel>
      <SocialTop>
        <LogoTile><WeChat /></LogoTile>
        <Row $gap={5}>
          <Square $s={43} $c="#bdeaca"><Chev dir="up" w={20} h={12} s={1.5} /></Square>
          <Square $s={43} $c="#bdeaca"><Chev w={20} h={12} s={1.5} /></Square>
          <Square $s={43} $c={c.red}><Trash w={17} /></Square>
        </Row>
      </SocialTop>
      <Rule $t={2} $c="#ececec" $m="15px 0 0" />
      <SocialFields>
        <div><Label $w={500} $c={c.grey}>URL<Req>*</Req></Label><Input $h={45} $bc={c.frame} $c="#000">https://www.moyer.com/</Input></div>
        <div><Label $w={500} $c={c.grey}>Text</Label><Input $h={45} $b={1} $bc="#b9b9b9" $c="#000">Surface five month image.</Input></div>
      </SocialFields>
    </SocialPanel>
    <Grid13>{brands.map((b, i) => <Cell key={i}>{b}</Cell>)}</Grid13>
  </Section>
);

/* ---------- fonts, welcome ---------- */
const FontPanel = styled.div`
  background: #f6f6f6; border-radius: 4px; height: 112px; margin-top: 11px; padding: 23px 15px 0; display: grid; grid-template-columns: 337px 337px; gap: 30px;
`;
const Tiny = styled.div`font-size: 10.5px; color: ${c.grey}; line-height: 16px; height: 21px; letter-spacing: 0;`;
const FontInput = styled.div`
  height: 45px; border: 1px solid #b9b9b9; border-radius: 4px; background: #fff; padding-left: 24px; line-height: 43px; color: #000; letter-spacing: 0;
  font-size: ${p => (p.$serif ? 19 : 16)}px; ${p => p.$serif && css`font-family: "Liberation Serif", serif;`}
  box-shadow: 0 35px 20px -8px rgba(0, 0, 0, 0.025);
`;
const Buttons = styled.div`display: flex; gap: 8px; margin-left: 16px;`;

/* ---------- sticky bar ---------- */
const TopBar = styled.div`
  position: absolute; left: 0; right: 0; top: 4190px; height: 71px; background: #fff; display: flex; align-items: center; padding-left: 135px;
  box-shadow: 0 1px 10px rgba(0, 0, 0, 0.18); z-index: 2;
`;
const LogoText = styled.div`
  width: 350px; margin-left: 8px; color: #111; font-size: 17px; line-height: 15px; letter-spacing: 0; padding-bottom: 2px;
  & > b { display: block; font-weight: 500; font-size: 22px; line-height: 18px; word-spacing: -0.16em; }
`;
const Num = styled.span`
  width: 22px; height: 22px; border-radius: 50%; background: ${p => p.$c}; color: #fff; font: 800 14px/22px Lato, sans-serif;
  display: flex; align-items: center; justify-content: center; letter-spacing: 0;
`;
const Step = styled.span`font-size: 14px; font-weight: 800; color: ${p => p.$c}; margin-left: 12px; width: ${p => p.$w}px; white-space: nowrap; letter-spacing: 0;`;
const Line = ({ a, b }) => (
  <svg width="43" height="10" viewBox="0 0 43 10"><path d="M0 5H36" stroke={a} strokeWidth="1.4" /><path d="M35.5 .5 43 5 35.5 9.5Z" fill={b} /></svg>
);
const MenuBtn = styled.div`
  width: 40px; height: 40px; border-radius: 4px; margin-left: 10px; background: linear-gradient(45deg, #26b566, ${c.green}); display: flex; align-items: center; justify-content: center;
`;
const QrLogo = () => (
  <svg width="34" height="33" viewBox="0 0 34 33" fill="none" stroke="#1fce85" strokeWidth="3">
    <rect x="1.5" y="1.5" width="12" height="12" rx="3.5" /><rect x="20.5" y="1.5" width="12" height="12" rx="3.5" /><rect x="1.5" y="19" width="12" height="12" rx="3.5" />
    <g fill="#1fce85" stroke="none"><rect x="5.5" y="5.5" width="4" height="4" /><rect x="24.5" y="5.5" width="4" height="4" /><rect x="15" y="14" width="4" height="4" /><rect x="29.5" y="18" width="4" height="4" /><rect x="19" y="28.5" width="3.5" height="3.5" /><rect x="28" y="27.5" width="5" height="5" /></g>
    <rect x="20.5" y="20.5" width="6" height="6" rx="1" strokeWidth="2.4" />
  </svg>
);

/* ---------- phone preview ---------- */
const Aside = styled.aside`margin: 4210px 0 0 148px; width: 256px; display: flex; flex-direction: column; align-items: center;`;
const Tabs = styled.div`width: 188px; height: 38px; border: 2px solid ${c.lime}; border-radius: 19px; background: #fff; padding: 2px; display: flex; font-size: 14.5px; font-weight: 800; letter-spacing: 0.01em;`;
const Tab = styled.div`width: 90px; height: 30px; border-radius: 15px; text-align: center; line-height: 29px; background: ${p => (p.$on ? c.lime : "transparent")}; color: ${p => (p.$on ? "#fff" : c.green)};`;
const Device = styled.div`
  position: relative; margin-top: 8px; width: 256px; height: 520px; border-radius: 42px; background: #000; border: 1px solid #5c5363; padding: 8.5px 10.5px;
  box-shadow: inset 0 0 0 1px #d9d5dd, inset 0 0 0 3px #51485a;
`;
const Key = styled.span`position: absolute; width: 3px; background: #7d7186; left: ${p => (p.$r ? "auto" : "-3px")}; right: ${p => (p.$r ? "-3px" : "auto")}; top: ${p => p.$t}px; height: ${p => p.$h}px;`;
const Screen = styled.div`position: relative; width: 231px; margin-left: 1px; height: 499px; border-radius: 33px; overflow: hidden; background: #fbfcfc; padding: 0 16px;`;
const Status = styled.div`
  height: 27px; background: #fff; display: flex; justify-content: space-between; align-items: flex-end; padding: 0 1px 1px 5px; color: #000; font: 800 9px/11px "Open Sans", sans-serif; letter-spacing: 0;
`;
const Island = styled.div`
  position: absolute; top: 8px; left: 71px; width: 81px; height: 24px; border-radius: 12px; background: #000;
  &::after { content: ""; position: absolute; right: 9px; top: 8px; width: 7px; height: 7px; border-radius: 50%; background: #10164a; }
`;
const Home = styled.div`position: absolute; bottom: 11px; left: 65px; width: 101px; height: 4px; border-radius: 2px; background: #000;`;
const MCard = styled.div`background: #fff; box-shadow: 0 3px 14px rgba(20, 60, 50, 0.05); margin-top: ${p => p.$t}px; height: ${p => p.$h}px; padding: ${p => p.$p};`;
const MHead = styled.div`font-size: 17px; line-height: 22px; margin-top: 24px; white-space: nowrap; color: #222b36;`;
const MTitle = styled.div`font-size: ${p => p.$s || 13.5}px; line-height: ${p => p.$l || 18}px; color: ${p => p.$c || "#000"}; white-space: nowrap; letter-spacing: 0.01em;`;
const MSub = styled.div`font-size: ${p => p.$s || 10}px; line-height: ${p => p.$l || 15.5}px; color: #8d9198; white-space: nowrap;`;
const MTile = styled.div`width: ${p => p.$s}px; height: ${p => p.$s}px; border-radius: ${p => p.$r}; background: #f7f7f8; color: #858a93; display: flex; align-items: center; justify-content: center; margin-right: ${p => p.$mr}px; flex: none;`;
const MText = styled.div`min-width: 0; flex: 1;`;

const Preview = () => (
  <Aside>
    <Tabs><Tab $on>Náhled</Tab><Tab>QR kód</Tab></Tabs>
    <Device>
      <Key $t={99} $h={19} /><Key $t={136} $h={38} /><Key $t={186} $h={38} /><Key $r $t={163} $h={58} />
      <Screen>
        <Status>
          9:41
          <svg width="37" height="10" viewBox="0 0 37 10">
            <path d="M1 9V7M3.5 9V5.5M6 9V4.2M8.5 9V2.5" stroke="#000" strokeWidth="1.7" />
            <path d="M13 4.5Q17.5 .8 22 4.5M14.8 6.5Q17.5 4.3 20.2 6.5" stroke="#000" strokeWidth="1.5" fill="none" /><circle cx="17.5" cy="8.2" r="1" />
            <rect x="25" y="3" width="10.5" height="5.5" rx="1.5" /><rect x="36" y="4.8" width="1" height="2" />
          </svg>
        </Status>
        <MCard $t={20} $h={81} $p="20px"><AllergenIcon k="bean" s={31} /></MCard>
        <MHead>Naše sociální sítě</MHead>
        <MCard $t={7} $h={70} $p="10px 13px 0 10px">
          <Row $gap={8}>
            <WeChat s={44} />
            <MText><MTitle $c="#222b36">WeChat</MTitle><MSub>Surface five month i<br />mage.</MSub></MText>
            <Arrow w={17} color="#858a93" s={1.5} />
          </Row>
        </MCard>
        <MCard $t={24} $h={300} $p="21px 12px 0">
          <Row>
            <MTile $s={44} $r="4px" $mr={18}>
              <svg width="20" height="20" viewBox="0 0 20 20" fill="none" stroke="currentColor" strokeWidth="1.4"><rect x="1" y="1" width="7" height="7" rx="2" /><rect x="12" y="1" width="7" height="7" rx="2" /><rect x="1" y="12" width="7" height="7" rx="2" /><rect x="12" y="12" width="7" height="7" rx="2" /></svg>
            </MTile>
            <MTitle $s={17.5} $l={26}>Kontakt</MTitle>
          </Row>
          <Rule $c="#ececec" $m="10px 0 15px" />
          <Row><MTile $s={40} $r="50%" $mr={10}><Phone s={16} /></MTile><MText><MSub $s={11.5} $l={15}>open</MSub><MTitle>(736)244-7298</MTitle></MText></Row>
          <Rule $c="#ececec" $m="15px 0 15px" />
          <Row><MTile $s={40} $r="50%" $mr={10}><Mail s={16} /></MTile><MText><MSub $s={11.5} $l={15}>finish</MSub><MTitle>julie98@example.…</MTitle></MText></Row>
          <Rule $c="#ececec" $m="15px 0 15px" />
        </MCard>
        <Island /><Home />
      </Screen>
    </Device>
  </Aside>
);

const Footer = styled.footer`
  position: relative; height: 76px; background: #fff; display: flex; justify-content: space-between; padding: 13px 135px 0; box-shadow: 0 -1px 10px rgba(0, 0, 0, 0.06);
`;

export default function App() {
  return (
    <Page>
      <Global />
      <Columns>
        <Main>
          <Title>2. Přidejte obsah do svého QR kódu</Title>
          <Design />
          <Info />
          <Menu />
          <Hours />
          <Contacts />
          <Social />
          <Section icon="type" title="Písmo" sub="Vytvořte si jedinečnou stránku pomocí originálních fontů." h={229}>
            <FontPanel>
              <div><Tiny>Název</Tiny><FontInput $serif>Oswald</FontInput></div>
              <div><Tiny>Texty</Tiny><FontInput>Slabo 27px</FontInput></div>
            </FontPanel>
          </Section>
          <Section icon="smile" title="Úvodní obrazovka" sub="Zobrazení obrázku během načítání stránky." h={225}>
            <ThumbRow $t={11}>
              <Picture />
              <Buttons><Solid $bg={`linear-gradient(70deg, #26b566, ${c.green})`}>Náhled</Solid><Solid>Smazat</Solid></Buttons>
            </ThumbRow>
          </Section>
          <Section icon="qr" title="Název QR kódu" sub="Pojmenujte svůj QR kód." h={84} closed />
          <Section icon="lock" title="Heslo" h={84} closed hint />
          <Section icon="folder" title="Složka" sub="Propojte tento QR s existující nebo novou složkou." h={84} closed />
        </Main>
        <Preview />
      </Columns>
      <Footer>
        <Outline $w="152px" $h={52} $fs={16.5} $fw={800} $gap={9}><Arrow left color={c.green} />Zpět</Outline>
        <Solid $w={152} $h={52} $bg={`linear-gradient(135deg, ${c.lime}, ${c.green})`}>Další <Arrow /></Solid>
      </Footer>
      <TopBar>
        <QrLogo />
        <LogoText>Online<b>QR Generator</b></LogoText>
        <Num $c="#2bb964"><svg width="14" height="12" viewBox="0 0 14 12" fill="none" stroke="#fff" strokeWidth="2.2"><path d="M1 6 5 10 13 1.5" /></svg></Num>
        <Step $c="#2bb964" $w={92}>Typ QR kódu</Step><Line a={c.green} b={c.green} />
        <Gap $w={13} /><Num $c="#2bb964">2</Num>
        <Step $c="#2bb964" $w={52}>Obsah</Step><Line a="#2a1230" b={c.grey} />
        <Gap $w={13} /><Num $c={c.grey}>3</Num><Step $c="#7b7b7b" $w={330}>QR design</Step>
        <Square $s={40} $c="#b9b9b9" $ic={c.grey}>
          <svg width="23" height="21" viewBox="0 0 23 21" fill="none" stroke="currentColor" strokeWidth="1.5" strokeLinejoin="round" strokeLinecap="round">
            <path d="M6 1H17Q22 1 22 5.5V12Q22 17 17 17H12.5L6.5 20 7 17Q1 17 1 12V5.5Q1 1 6 1Z" />
            <path d="M9.5 6.5Q10 5 11.5 5 13.5 5 13.5 6.8 13.5 8 11.6 9.5V10.5M11.6 13V13.1" />
          </svg>
        </Square>
        <MenuBtn><svg width="18" height="18" viewBox="0 0 18 18" stroke="#fff" strokeWidth="2"><path d="M0 1.5H18M0 9H18M0 16.5H18" /></svg></MenuBtn>
      </TopBar>
    </Page>
  );
}
